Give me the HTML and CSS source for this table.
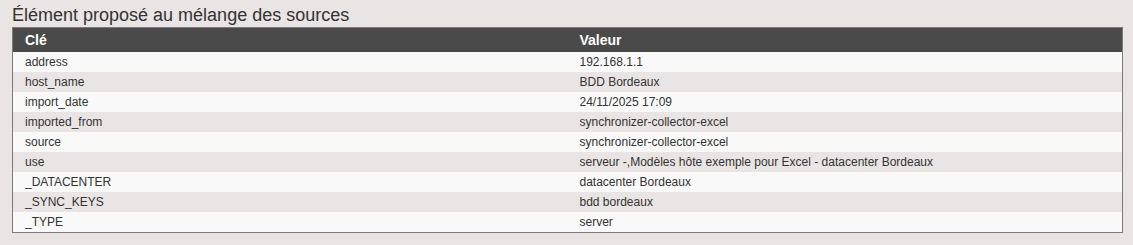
FILE: index.html
```html
<!DOCTYPE html>
<html lang="fr">
<head>
<meta charset="utf-8">
<title>Élément proposé</title>
<link rel="stylesheet" href="styles.css">
</head>
<body>
<div class="panel">
  <h2 class="panel-title">Élément proposé au mélange des sources</h2>
  <table class="kv">
    <thead>
      <tr><th>Clé</th><th>Valeur</th></tr>
    </thead>
    <tbody>
      <tr><td>address</td><td>192.168.1.1</td></tr>
      <tr><td>host_name</td><td>BDD Bordeaux</td></tr>
      <tr><td>import_date</td><td>24/11/2025 17:09</td></tr>
      <tr><td>imported_from</td><td>synchronizer-collector-excel</td></tr>
      <tr><td>source</td><td>synchronizer-collector-excel</td></tr>
      <tr><td>use</td><td>serveur -,Modèles hôte exemple pour Excel - datacenter Bordeaux</td></tr>
      <tr><td>_DATACENTER</td><td>datacenter Bordeaux</td></tr>
      <tr><td>_SYNC_KEYS</td><td>bdd bordeaux</td></tr>
      <tr><td>_TYPE</td><td>server</td></tr>
    </tbody>
  </table>
</div>
</body>
</html>
```
FILE: styles.css
```css
html, body {
  margin: 0;
  padding: 0;
  background: #e9e5e4;
}
body {
  font-family: "Liberation Sans", Arial, sans-serif;
  color: #333;
}
.panel {
  padding: 3px 10px 0 12px;
}
.panel-title {
  margin: 0;
  font-size: 18px;
  font-weight: normal;
  line-height: 24px;
  color: #333;
}
.kv {
  width: 1111px;
  border-collapse: collapse;
  border: 1px solid #7b7a80;
  table-layout: fixed;
}
.kv th {
  background: #4a4a4a;
  color: #fff;
  font-weight: bold;
  font-size: 14px;
  text-align: left;
  height: 24px;
  padding: 0 12px;
  line-height: 24px;
}
.kv td {
  font-size: 12px;
  line-height: 19px;
  padding: 1px 12px 0;
  color: #333;
}
.kv tbody tr:nth-child(odd) {
  background: #f9f9f9;
}
.kv tbody tr:nth-child(even) {
  background: #e9e5e4;
}
```
